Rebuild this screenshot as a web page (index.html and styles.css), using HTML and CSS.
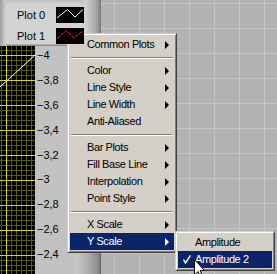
FILE: index.html
```html
<!DOCTYPE html>
<html lang="en">
<head>
    <meta charset="UTF-8">
    <title>Graph - Plot Menu</title>
    <link rel="stylesheet" href="styles.css">
</head>
<body>
    <div class="desk">
        <div class="panel">
            <div class="legend">
                <div class="legend-row">
                    <span class="legend-name">Plot 0</span>
                    <svg class="legend-swatch" width="28" height="16" viewBox="0 0 28 16">
                        <polyline points="1,11 11.5,2.5 19,10 27,2.5" fill="none" stroke="#fff" stroke-width="1"/>
                    </svg>
                </div>
                <div class="legend-row">
                    <span class="legend-name">Plot 1</span>
                    <svg class="legend-swatch" width="28" height="16" viewBox="0 0 28 16">
                        <polyline points="1,11 10.5,2.5 18,10 27,2.5" fill="none" stroke="#ff2a2a" stroke-width="1" stroke-dasharray="4 1"/>
                    </svg>
                </div>
            </div>

            <div class="graph">
                <svg class="plot" width="35" height="228" viewBox="0 0 35 228">
                    <g stroke="#5a5a00" stroke-width="1">
                        <line x1="1.5" y1="0" x2="1.5" y2="228"/>
                        <line x1="11.5" y1="0" x2="11.5" y2="228"/>
                        <line x1="16.5" y1="0" x2="16.5" y2="228"/>
                        <line x1="21.5" y1="0" x2="21.5" y2="228"/>
                        <line x1="26.5" y1="0" x2="26.5" y2="228"/>
                        <line x1="31.5" y1="0" x2="31.5" y2="228"/>
                        <line x1="0" y1="4.5" x2="35" y2="4.5"/>
                        <line x1="0" y1="14.5" x2="35" y2="14.5"/>
                        <line x1="0" y1="19.5" x2="35" y2="19.5"/>
                        <line x1="0" y1="24.5" x2="35" y2="24.5"/>
                        <line x1="0" y1="29.5" x2="35" y2="29.5"/>
                        <line x1="0" y1="39.5" x2="35" y2="39.5"/>
                        <line x1="0" y1="44.5" x2="35" y2="44.5"/>
                        <line x1="0" y1="49.5" x2="35" y2="49.5"/>
                        <line x1="0" y1="54.5" x2="35" y2="54.5"/>
                        <line x1="0" y1="64.5" x2="35" y2="64.5"/>
                        <line x1="0" y1="69.5" x2="35" y2="69.5"/>
                        <line x1="0" y1="74.5" x2="35" y2="74.5"/>
                        <line x1="0" y1="79.5" x2="35" y2="79.5"/>
                        <line x1="0" y1="89.5" x2="35" y2="89.5"/>
                        <line x1="0" y1="94.5" x2="35" y2="94.5"/>
                        <line x1="0" y1="99.5" x2="35" y2="99.5"/>
                        <line x1="0" y1="104.5" x2="35" y2="104.5"/>
                        <line x1="0" y1="114.5" x2="35" y2="114.5"/>
                        <line x1="0" y1="119.5" x2="35" y2="119.5"/>
                        <line x1="0" y1="124.5" x2="35" y2="124.5"/>
                        <line x1="0" y1="129.5" x2="35" y2="129.5"/>
                        <line x1="0" y1="139.5" x2="35" y2="139.5"/>
                        <line x1="0" y1="144.5" x2="35" y2="144.5"/>
                        <line x1="0" y1="149.5" x2="35" y2="149.5"/>
                        <line x1="0" y1="154.5" x2="35" y2="154.5"/>
                        <line x1="0" y1="164.5" x2="35" y2="164.5"/>
                        <line x1="0" y1="169.5" x2="35" y2="169.5"/>
                        <line x1="0" y1="174.5" x2="35" y2="174.5"/>
                        <line x1="0" y1="179.5" x2="35" y2="179.5"/>
                        <line x1="0" y1="189.5" x2="35" y2="189.5"/>
                        <line x1="0" y1="194.5" x2="35" y2="194.5"/>
                        <line x1="0" y1="199.5" x2="35" y2="199.5"/>
                        <line x1="0" y1="204.5" x2="35" y2="204.5"/>
                        <line x1="0" y1="214.5" x2="35" y2="214.5"/>
                        <line x1="0" y1="219.5" x2="35" y2="219.5"/>
                        <line x1="0" y1="224.5" x2="35" y2="224.5"/>
                    </g>
                    <g stroke="#d8d800" stroke-width="1">
                        <line x1="6.5" y1="0" x2="6.5" y2="228"/>
                        <line x1="0" y1="9.5" x2="35" y2="9.5"/>
                        <line x1="0" y1="34.5" x2="35" y2="34.5"/>
                        <line x1="0" y1="59.5" x2="35" y2="59.5"/>
                        <line x1="0" y1="84.5" x2="35" y2="84.5"/>
                        <line x1="0" y1="109.5" x2="35" y2="109.5"/>
                        <line x1="0" y1="134.5" x2="35" y2="134.5"/>
                        <line x1="0" y1="159.5" x2="35" y2="159.5"/>
                        <line x1="0" y1="184.5" x2="35" y2="184.5"/>
                        <line x1="0" y1="209.5" x2="35" y2="209.5"/>
                    </g>
                    <line x1="0" y1="41" x2="35" y2="9" stroke="#fff" stroke-width="1"/>
                </svg>
                <div class="scale">
                    <span class="tick">−4</span>
                    <span class="tick">−3,8</span>
                    <span class="tick">−3,6</span>
                    <span class="tick">−3,4</span>
                    <span class="tick">−3,2</span>
                    <span class="tick">−3</span>
                    <span class="tick">−2,8</span>
                    <span class="tick">−2,6</span>
                    <span class="tick">−2,4</span>
                </div>
                <div class="frame-edge"></div>
            </div>
        </div>

        <div class="menu">
            <div class="menu-item">Common Plots<span class="arrow"></span></div>
            <div class="menu-sep"></div>
            <div class="menu-item">Color<span class="arrow"></span></div>
            <div class="menu-item">Line Style<span class="arrow"></span></div>
            <div class="menu-item">Line Width<span class="arrow"></span></div>
            <div class="menu-item">Anti-Aliased</div>
            <div class="menu-sep"></div>
            <div class="menu-item">Bar Plots<span class="arrow"></span></div>
            <div class="menu-item">Fill Base Line<span class="arrow"></span></div>
            <div class="menu-item">Interpolation<span class="arrow"></span></div>
            <div class="menu-item">Point Style<span class="arrow"></span></div>
            <div class="menu-sep"></div>
            <div class="menu-item">X Scale<span class="arrow"></span></div>
            <div class="menu-item active">Y Scale<span class="arrow"></span></div>
        </div>

        <div class="menu submenu">
            <div class="menu-item">Amplitude</div>
            <div class="menu-item active">
                <svg class="check" width="8" height="9" viewBox="0 0 8 9">
                    <polyline points="0.5,4.5 2.5,8 7.5,0.5" fill="none" stroke="#fff" stroke-width="1.4"/>
                </svg>
                Amplitude 2
            </div>
        </div>

        <svg class="cursor" width="12" height="19" viewBox="0 0 12 19">
            <path d="M0.5,0.5 L0.5,16 L4,12.5 L6.5,18 L8.5,17 L6,11.5 L10.5,11.5 Z" fill="#fff" stroke="#000" stroke-width="1"/>
        </svg>
    </div>
</body>
</html>
```

FILE: styles.css
```css
body {
    margin: 0;
    font-family: 'Liberation Sans', Arial, sans-serif;
}

.desk {
    position: relative;
    width: 277px;
    height: 274px;
    overflow: hidden;
    background-color: #b3b3b3;
    background-image:
        linear-gradient(to right, #c6c6c6 1px, transparent 1px),
        linear-gradient(to bottom, #c6c6c6 1px, transparent 1px);
    background-size: 25px 25px;
    background-position: 14px 3px;
}

.panel {
    width: 101px;
    display: flex;
    flex-direction: column;
}

/* legend */
.legend {
    height: 46px;
    box-sizing: border-box;
    padding-top: 4px;
    background:
        linear-gradient(to bottom, #bdbdbd 0, #d2d2d2 4px, #d2d2d2 44px, #8a8a8a 45px),
        #d2d2d2;
    position: relative;
}

.legend::before {
    content: "";
    position: absolute;
    top: 0;
    right: 0;
    width: 16px;
    height: 46px;
    background: linear-gradient(to right, #d2d2d2, #a6a6a6 70%, #7a7a7a);
}

.legend::after {
    content: "";
    position: absolute;
    top: 0;
    left: 0;
    width: 6px;
    height: 46px;
    background: linear-gradient(to right, #9c9c9c, #d2d2d2);
}

.legend-row {
    height: 21px;
    display: flex;
    align-items: center;
    padding-left: 17px;
    position: relative;
    z-index: 1;
}

.legend-name {
    width: 39px;
    font-size: 11px;
    color: #000;
}

.legend-swatch {
    display: block;
    background: #000;
}

/* graph */
.graph {
    display: flex;
    height: 228px;
    background: #c2c2c2;
}

.plot {
    display: block;
    background: #000;
    flex: none;
}

.scale {
    display: flex;
    flex-direction: column;
    margin-top: -3px;
    padding-left: 2px;
    width: 38px;
    flex: none;
}

.tick {
    height: 24.9px;
    line-height: 24.9px;
    font-size: 11px;
    color: #000;
}

.frame-edge {
    flex: 1;
    background: linear-gradient(to right, #c8c8c8, #b4b4b4 40%, #8c8c8c 90%, #5e5e5e);
}

/* popup menus */
.menu {
    position: absolute;
    left: 67px;
    top: 33px;
    width: 110px;
    box-sizing: border-box;
    padding: 2px;
    background: #d4d0c8;
    border-top: 1px solid #d4d0c8;
    border-left: 1px solid #d4d0c8;
    border-right: 1px solid #404040;
    border-bottom: 1px solid #404040;
    box-shadow: inset 1px 1px 0 #fff, inset -1px -1px 0 #808080;
}

.menu-item {
    height: 17px;
    line-height: 17px;
    padding-left: 17px;
    font-size: 11px;
    letter-spacing: -0.4px;
    color: #000;
    display: flex;
    align-items: center;
    position: relative;
    white-space: nowrap;
}

.menu-item.active {
    background: #0a246a;
    color: #fff;
}

.arrow {
    margin-left: auto;
    margin-right: 5px;
    width: 0;
    height: 0;
    border-left: 4px solid #000;
    border-top: 4px solid transparent;
    border-bottom: 4px solid transparent;
}

.active .arrow {
    border-left-color: #fff;
}

.menu-sep {
    height: 9px;
    margin: 0 1px;
    background: linear-gradient(to bottom, transparent 4px, #808080 4px, #808080 5px, #fff 5px, #fff 6px, transparent 6px);
}

.submenu {
    left: 175px;
    top: 231px;
    width: 100px;
}

.check {
    position: absolute;
    left: 5px;
    top: 4px;
}

.cursor {
    position: absolute;
    left: 194px;
    top: 259px;
}
```
